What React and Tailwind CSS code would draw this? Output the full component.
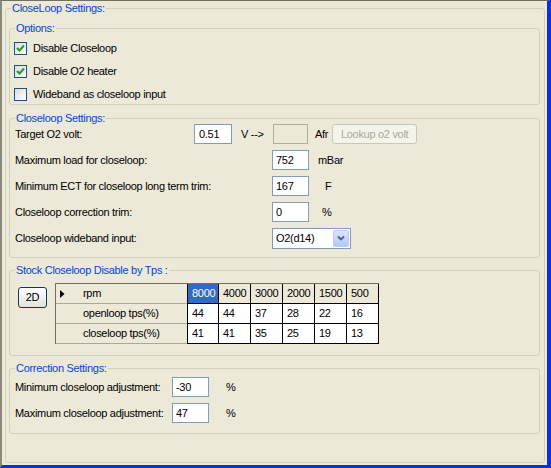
import React from "react";

function GroupBox({ title, className = "", children }) {
  return (
    <div className={`border border-[#d0d0bf] rounded-[3px] ${className}`}>
      <div className="-mt-[7px] ml-[5px] w-fit px-[1px] bg-[#ece9d8] text-[#0046d5] leading-[13px]">
        {title}
      </div>
      {children}
    </div>
  );
}

function CheckBox({ checked, label }) {
  return (
    <div className="h-[23px] flex items-center">
      <div className="ml-[4px] w-[13px] h-[13px] border border-[#1c5180] bg-gradient-to-br from-[#dcdcd7] to-white flex items-center justify-center">
        {checked && (
          <svg width="9" height="9" viewBox="0 0 9 9">
            <path d="M1 4 L3.5 6.5 L8 1.5" stroke="#21a121" strokeWidth="2.2" fill="none" />
          </svg>
        )}
      </div>
      <span className="ml-[6px]">{label}</span>
    </div>
  );
}

function TextBox({ value, className = "" }) {
  return (
    <div className={`h-[20px] border border-[#7f9db9] bg-white pl-[3px] flex items-center ${className}`}>
      {value}
    </div>
  );
}

export default function App() {
  const gridRows = [
    { label: "rpm", values: ["8000", "4000", "3000", "2000", "1500", "500"] },
    { label: "openloop tps(%)", values: ["44", "44", "37", "28", "22", "16"] },
    { label: "closeloop tps(%)", values: ["41", "41", "35", "25", "19", "13"] },
  ];

  return (
    <div className="w-[551px] h-[468px] bg-[#ece9d8] border-l-2 border-l-[#8a887c] border-t border-t-[#716f64] border-r-4 border-r-[#0831d9] border-b-[3px] border-b-[#0831d9] font-['Liberation_Sans',Arial,sans-serif] text-[11px] tracking-[-0.3px] whitespace-nowrap text-black overflow-hidden">
      <GroupBox title="CloseLoop Settings:" className="ml-[3px] mt-[7px] w-[540px] h-[455px]">
        {/* Options */}
        <GroupBox title="Options:" className="ml-[3px] mt-[13px] w-[531px] h-[77px]">
          <div className="mt-[2px]">
            <CheckBox checked label="Disable Closeloop" />
            <CheckBox checked label="Disable O2 heater" />
            <CheckBox label="Wideband as closeloop input" />
          </div>
        </GroupBox>

        {/* Closeloop Settings */}
        <GroupBox title="Closeloop Settings:" className="ml-[3px] mt-[13px] w-[531px] h-[140px]">
          <div className="-mt-[1px] flex flex-col gap-[6px] pl-[5px]">
            <div className="h-[20px] flex items-center">
              <span className="w-[179px]">Target O2 volt:</span>
              <TextBox value="0.51" className="w-[38px] pl-[4px]" />
              <span className="ml-[9px] w-[32px]">V --&gt;</span>
              <div className="w-[35px] h-[20px] border border-[#b0ad9f]" />
              <span className="ml-[7px]">Afr</span>
              <div className="ml-[4px] w-[85px] h-[20px] border border-[#c9c7ba] rounded-[3px] bg-[#f5f4ea] text-[#aca899] flex items-center justify-center">
                Lookup o2 volt
              </div>
            </div>
            <div className="h-[20px] flex items-center">
              <span className="w-[257px]">Maximum load for closeloop:</span>
              <TextBox value="752" className="w-[37px]" />
              <span className="ml-[9px]">mBar</span>
            </div>
            <div className="h-[20px] flex items-center">
              <span className="w-[257px]">Minimum ECT for closeloop long term trim:</span>
              <TextBox value="167" className="w-[37px]" />
              <span className="ml-[16px]">F</span>
            </div>
            <div className="h-[20px] flex items-center">
              <span className="w-[257px]">Closeloop correction trim:</span>
              <TextBox value="0" className="w-[37px]" />
              <span className="ml-[13px]">%</span>
            </div>
            <div className="h-[20px] flex items-center">
              <span className="w-[257px]">Closeloop wideband input:</span>
              <div className="w-[79px] h-[21px] border border-[#7f9db9] bg-white flex items-center justify-between">
                <span className="pl-[3px]">O2(d14)</span>
                <div className="mr-[1px] w-[16px] h-[17px] rounded-[2px] border border-[#b9c9ef] bg-gradient-to-b from-[#dbe5fd] to-[#b3c8f7] flex items-center justify-center">
                  <svg width="8" height="6" viewBox="0 0 8 6">
                    <path d="M1 1.5 L4 4.5 L7 1.5" stroke="#4d6185" strokeWidth="1.8" fill="none" />
                  </svg>
                </div>
              </div>
            </div>
          </div>
        </GroupBox>

        {/* Stock Closeloop Disable by Tps */}
        <GroupBox title="Stock Closeloop Disable by Tps :" className="ml-[3px] mt-[12px] w-[531px] h-[86px]">
          <div className="mt-[6px] flex items-start">
            <div className="ml-[8px] mt-[4px] w-[29px] h-[21px] border border-[#003c74] rounded-[3px] bg-gradient-to-b from-white to-[#e3e2d9] flex items-center justify-center">
              2D
            </div>
            <div className="ml-[8px] border-l border-t border-[#716f64]">
              {gridRows.map((r, i) => (
                <div key={r.label} className="flex h-[20px]">
                  <div className="w-[131px] flex items-center bg-[#ece9d8] border-b border-[#aca899]">
                    <span className="w-[27px] pl-[4px] flex justify-start">
                      {i === 0 && (
                        <svg width="5" height="8" viewBox="0 0 5 8">
                          <path d="M0 0 L4.5 4 L0 8 Z" fill="#000" />
                        </svg>
                      )}
                    </span>
                    <span>{r.label}</span>
                  </div>
                  {r.values.map((v, j) => (
                    <div
                      key={j}
                      className={`w-[32px] border-r border-b border-black pl-[4px] flex items-center ${
                        j === 0 ? "border-l" : ""
                      } ${
                        i === 0
                          ? j === 0
                            ? "bg-[#316ac5] text-white"
                            : "bg-[#ece9d8]"
                          : "bg-white"
                      }`}
                    >
                      {v}
                    </div>
                  ))}
                </div>
              ))}
            </div>
          </div>
        </GroupBox>

        {/* Correction Settings */}
        <GroupBox title="Correction Settings:" className="ml-[3px] mt-[12px] w-[531px] h-[66px]">
          <div className="mt-[2px] flex flex-col gap-[6px] pl-[5px]">
            <div className="h-[20px] flex items-center">
              <span className="w-[157px]">Minimum closeloop adjustment:</span>
              <TextBox value="-30" className="w-[37px]" />
              <span className="ml-[17px]">%</span>
            </div>
            <div className="h-[20px] flex items-center">
              <span className="w-[157px]">Maximum closeloop adjustment:</span>
              <TextBox value="47" className="w-[37px]" />
              <span className="ml-[17px]">%</span>
            </div>
          </div>
        </GroupBox>
      </GroupBox>
    </div>
  );
}
